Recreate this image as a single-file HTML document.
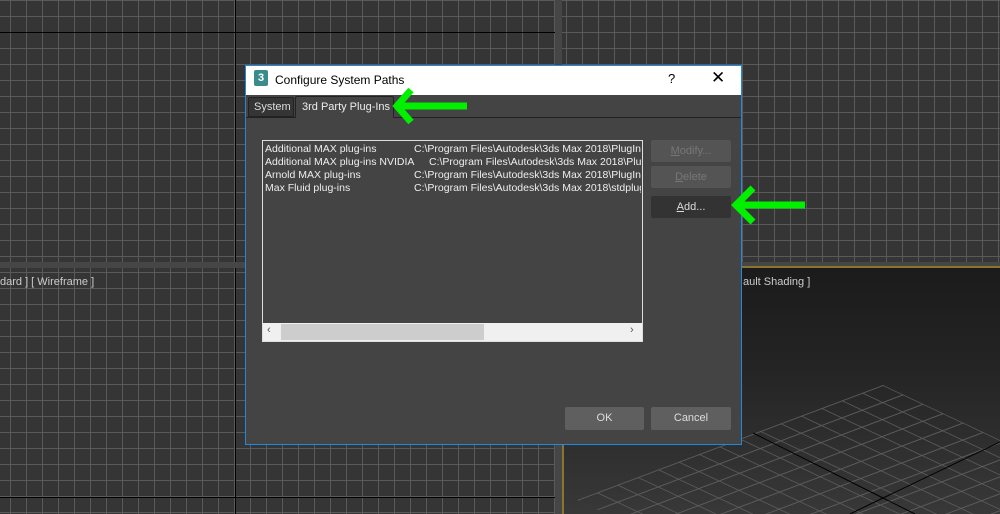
<!DOCTYPE html>
<html><head><style>
*{margin:0;padding:0;box-sizing:border-box}
html,body{width:1000px;height:514px;overflow:hidden}
body{background:#464646;position:relative;font-family:"Liberation Sans",sans-serif}
.vp{position:absolute;background-color:#353535;
background-image:linear-gradient(#5a5a5a 1px,transparent 1px),linear-gradient(90deg,#5a5a5a 1px,transparent 1px);
background-size:16px 16px}
.ab{position:absolute}
.btn{position:absolute;left:651px;width:80px;height:22px;background:#545454;border-radius:2px;color:#777;font-size:11px;text-align:center;line-height:22px}
.row{position:absolute;left:265px;font-size:10.5px;color:#eee;white-space:nowrap}
</style></head><body>
<div class="vp" style="left:0;top:0;width:555px;height:262px;background-position:10px 0"></div>
<div class="ab" style="left:235px;top:0;width:1px;height:262px;background:#000"></div>
<div class="ab" style="left:0;top:32px;width:555px;height:1px;background:#000"></div>
<div class="vp" style="left:562px;top:0;width:438px;height:262px;background-position:4px 0"></div>
<div class="vp" style="left:0;top:268px;width:555px;height:246px;background-position:10px 4px"></div>
<div class="ab" style="left:235px;top:268px;width:1px;height:246px;background:#000"></div>
<div class="ab" style="left:0;top:497px;width:555px;height:1px;background:#000"></div>
<div class="ab" style="left:0;top:276px;font-size:11px;color:#ccc">dard ] [ Wireframe ]</div>
<div class="ab" style="left:562px;top:266px;width:438px;height:248px;border-top:2px solid #8a7430;border-left:2px solid #8a7430;background:linear-gradient(#1b1b1b,#242424 40%,#383838)"></div>
<svg class="ab" style="left:0;top:0" width="1000" height="514">
<defs>
<pattern id="g" width="1" height="1" patternUnits="userSpaceOnUse" patternTransform="matrix(-20.4 7.67 20 9.4 883 385)">
<rect x="0" y="0" width="1" height="0.06" fill="#5c5c5c"/><rect x="0" y="0" width="0.05" height="1" fill="#5c5c5c"/>
</pattern>
<clipPath id="c"><rect x="564" y="268" width="436" height="246"/></clipPath>
</defs>
<g clip-path="url(#c)">
<polygon points="883,385 577,500 977,688 1283,573" fill="url(#g)"/>
<path d="M753 433 L883 498 L915 514 M1000 442 L883 498 L850 514" stroke="#000" stroke-width="1" fill="none"/>
</g>
</svg>
<div class="ab" style="left:743px;top:276px;font-size:11px;color:#ccc">ault Shading ]</div>

<div class="ab" style="left:245px;top:65px;width:497px;height:380px;background:#444;border:1px solid #1e88e5"></div>
<div class="ab" style="left:246px;top:66px;width:495px;height:29px;background:#fff"></div>
<div class="ab" style="left:254px;top:70px;width:14px;height:16px;background:#3a8c8c;border-radius:2px;color:#fff;font-size:11px;font-weight:bold;text-align:center;line-height:16px">3</div>
<div class="ab" style="left:275px;top:73px;font-size:12px;color:#000">Configure System Paths</div>
<div class="ab" style="left:668px;top:71px;font-size:13px;color:#000">?</div>
<div class="ab" style="left:711px;top:68px;font-size:17px;color:#000">✕</div>
<div class="ab" style="left:248px;top:97px;width:46px;height:20px;background:#353535;border:1px solid #222;border-radius:2px 2px 0 0;color:#ddd;font-size:11px;padding:3px 0 0 5px">System</div>
<div class="ab" style="left:295px;top:96px;width:99px;height:22px;background:#444;border:1px solid #222;border-bottom:none;border-radius:2px 2px 0 0;color:#eee;font-size:11px;padding:4px 0 0 6px">3rd Party Plug-Ins</div>
<div class="ab" style="left:394px;top:117px;width:347px;height:1px;background:#222"></div>
<div class="ab" style="left:246px;top:117px;width:49px;height:1px;background:#222"></div>
<div class="ab" style="left:262px;top:140px;width:381px;height:202px;background:#444;border:1px solid #ddd"></div>
<div class="row" style="top:143px">Additional MAX plug-ins</div><div class="row" style="top:143px;left:414px;width:227px;overflow:hidden">C:\Program Files\Autodesk\3ds Max 2018\PlugIns</div>
<div class="row" style="top:156px">Additional MAX plug-ins NVIDIA</div><div class="row" style="top:156px;left:429px;width:212px;overflow:hidden">C:\Program Files\Autodesk\3ds Max 2018\PlugIns</div>
<div class="row" style="top:169px">Arnold MAX plug-ins</div><div class="row" style="top:169px;left:414px;width:227px;overflow:hidden">C:\Program Files\Autodesk\3ds Max 2018\PlugIns</div>
<div class="row" style="top:182px">Max Fluid plug-ins</div><div class="row" style="top:182px;left:414px;width:227px;overflow:hidden">C:\Program Files\Autodesk\3ds Max 2018\stdplugs</div>
<div class="ab" style="left:263px;top:323px;width:379px;height:18px;background:#f0f0f0"></div>
<div class="ab" style="left:281px;top:324px;width:203px;height:16px;background:#cdcdcd"></div>
<div class="ab" style="left:267px;top:324px;font-size:11px;color:#555">‹</div>
<div class="ab" style="left:630px;top:324px;font-size:11px;color:#555">›</div>
<div class="btn" style="top:140px"><u>M</u>odify...</div>
<div class="btn" style="top:166px"><u>D</u>elete</div>
<div class="btn" style="top:196px;background:#333;color:#ddd"><u>A</u>dd...</div>
<div class="btn" style="top:407px;left:565px;width:79px;height:23px;background:#5f5f5f;color:#ddd">OK</div>
<div class="btn" style="top:407px;height:23px;background:#5f5f5f;color:#ddd">Cancel</div>
<svg class="ab" style="left:0;top:0" width="1000" height="514"><g stroke="#00f000" stroke-width="7" fill="none">
<path d="M398 106 H467 M411 90 L397 106 L411 122"/>
<path d="M737 205 H805 M753 188 L736 205 L753 222"/></g></svg>
</body></html>
